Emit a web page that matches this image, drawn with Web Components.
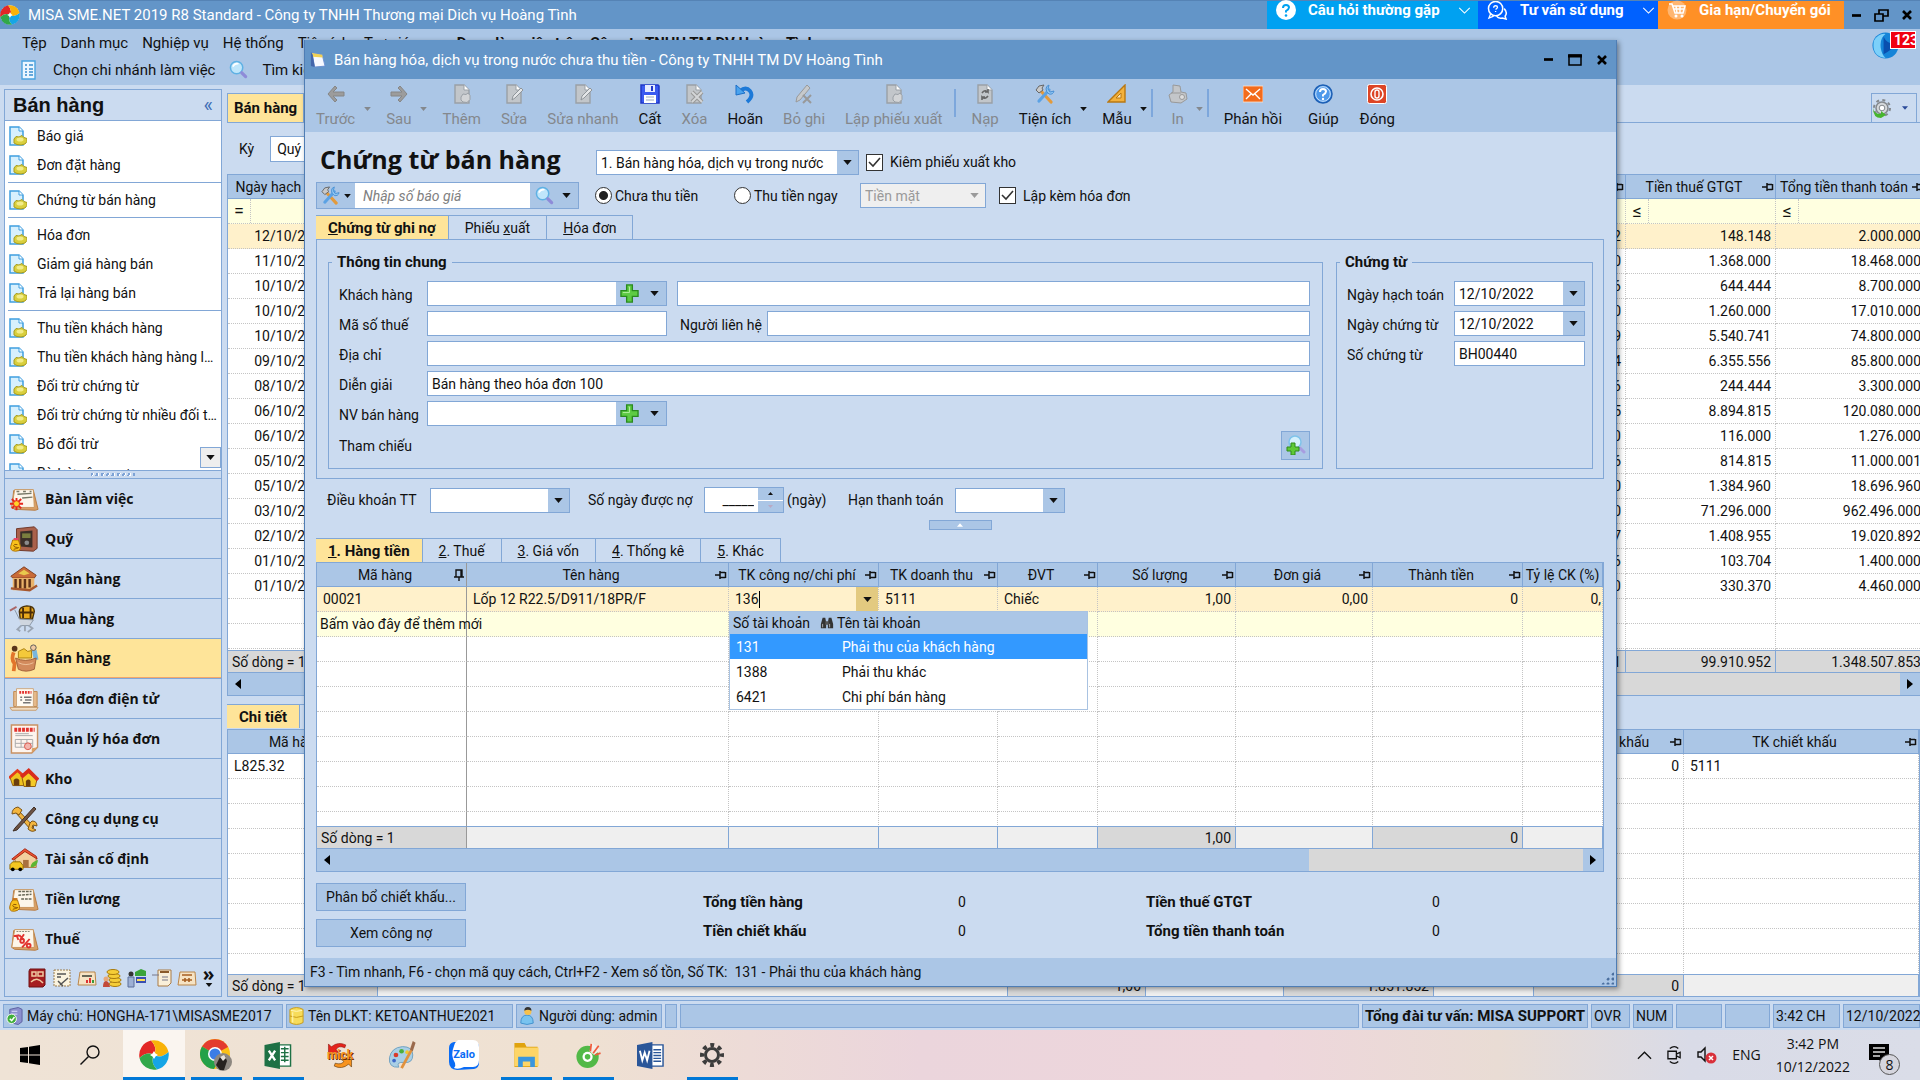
<!DOCTYPE html>
<html lang="vi">
<head>
<meta charset="utf-8">
<title>MISA SME.NET 2019</title>
<style>
  html, body { margin: 0; height: 100%; overflow: hidden; }
  body {
    font: 14px/18px Roboto, "Liberation Sans", sans-serif;
    color: #111;

    --title: #6395c8;
    --bar: #abc6e6;
    --face: #cbdbf0;
    --line: #82a7d6;
    --tab: #fee499;
    --row: #fff1cb;
    --newrow: #ffffe0;
    --grey: #d8d8d8;
    --ui-bold: "Open Sans", "Noto Sans", sans-serif;
  }
</style>
</head>
<body>
<misa-desktop></misa-desktop>

<script>
// ---------- helpers ----------
const BASE = `
  *, *::before, *::after { box-sizing: border-box; }
  button, input, select { font: inherit; color: inherit; margin: 0; border-radius: 0; }
  button { background: none; border: 0; padding: 0; cursor: default; white-space: nowrap; }
  a { color: inherit; text-decoration: none; }
  h1, h2 { margin: 0; font-weight: 700; }
  svg { display: block; flex: none; }
`;

function define(name, css, html) {
  customElements.define(name, class extends HTMLElement {
    connectedCallback() {
      if (this.shadowRoot) return;
      const root = this.attachShadow({ mode: 'open' });
      root.innerHTML = `<style>${BASE}${css}</style>` + (typeof html === 'function' ? html(this) : html);
    }
  });
}

// ---------- icons ----------
const PAGE = (fill, edge) => `<path d="M3 1h9l5 5v13H3z" fill="${fill}" stroke="${edge}" stroke-width="1.4"/><path d="M12 1v5h5" fill="#fff" stroke="${edge}"/>`;
const BOARD = `<path d="M5 5h21l5 20-3 1-22-1-3-2z" fill="#d9a066" stroke="#b5793f"/><path d="M6 4h20l1 19H3z" fill="#fdf6ea" stroke="#c8935a"/>`;
const GREY_DOC = PAGE('#c2c6ca', '#9aa0a6');
const BLADE = 'M15 15Q8 11 .5 18A15 15 0 0 1 12 .5Q19 8 15 15z';

const ICONS = {
  misa: ['0 0 30 30', `<circle cx="15" cy="15" r="14.500" fill="#fff"/><path d="${BLADE}" fill="#e32726"/><path d="${BLADE}" transform="rotate(90 15 15)" fill="#f9b208"/><path d="${BLADE}" transform="rotate(180 15 15)" fill="#16a5e5"/><path d="${BLADE}" transform="rotate(270 15 15)" fill="#31a84a"/><path d="M15 11l1.500 2.500L19 15l-2.500 1.500L15 19l-1.500-2.500L11 15l2.500-1.500z" fill="#fff"/>`],
  list: ['0 0 20 20', `<path d="M3 1h13v18H3z" fill="#eaf6ff" stroke="#4aa3df" stroke-width="1.4"/><path d="M6 5h2m2 0h4M6 9h2m2 0h4M6 12h2m2 0h4M6 15h2m2 0h4" stroke="#3a8fd0" stroke-width="1.6"/>`],
  find: ['0 0 20 20', `<circle cx="8" cy="8" r="6.5" fill="#bfe6fb" stroke="#5fb1e4" stroke-width="1.6"/><path d="M4 7q2-4 6-3" stroke="#fff" stroke-width="1.6" fill="none"/><path d="M13.5 13.5l4 4" stroke="#8e8bd8" stroke-width="3.4" stroke-linecap="round"/>`],
  findadd: ['0 0 20 20', `<circle cx="9" cy="7" r="6" fill="#d5f0fc" stroke="#7fc3ea" stroke-width="1.5"/><path d="M14 13l4 4" stroke="#a79de0" stroke-width="3" stroke-linecap="round"/><path d="M5 8h4v4h4v4H9v4H5v-4H1v-4h4z" fill="#5fc936" stroke="#2e8b1b"/>`],
  doc: ['0 0 18 20', `<path d="M1 1h9l4 4v14H1z" fill="#d7f0fd" stroke="#3f9ee0" stroke-width="1.5"/><path d="M10 1v4h4" fill="#fff" stroke="#3f9ee0"/><path d="M5 13l2-2.500 3 .5 3-1.500 2 2 3 1v3l-2 2.500-4 1-4-.5-3-1.500z" fill="#d9cf3d" stroke="#a79b1e"/><ellipse cx="11" cy="13.500" rx="3.500" ry="2" fill="#f2ec8a"/>`],
  desk: ['0 0 32 28', BOARD + `<path d="M9 9l15-1M8 6h3m4 0h3m4 0h2M14 13l11-1" stroke="#776" stroke-width="1.600"/><g stroke="#e5261b" stroke-width="2"><path d="M8 13v13M1 19h14M3 14l10 10M13 14L3 24"/></g><circle cx="8" cy="19" r="3.200" fill="#ffd32b" stroke="#e5261b"/>`],
  fund: ['0 0 32 28', `<path d="M8 3l19-2 3 3v20l-4 3-18-1z" fill="#a9614b" stroke="#6d3526"/><path d="M12 6l13-1v18l-13-1z" fill="#3b2f28"/><path d="M14 8h9v5h-9z" fill="#7b7f3e"/><circle cx="19" cy="18" r="2.500" fill="#8b8b8b"/><path d="M4 15h6l1 3q4 9-4 9T3 18z" fill="#f9c21a" stroke="#a96d06"/><path d="M5 14h5" stroke="#e46" stroke-width="2"/><path d="M9 20q-4-1-4 1t4 2-4 2" fill="none" stroke="#8a5300"/>`],
  bank: ['0 0 32 28', `<path d="M2 11L16 1l13 9-2 3H4z" fill="#c96b38" stroke="#7e3d1d"/><path d="M10 8l6-4 6 4-6 2z" fill="#e8c94d"/><path d="M4 13h23v10l-5 3H4z" fill="#e9b26a"/><path d="M7 14v10m5-10v10m5-10v10m5-10v9" stroke="#5e3219" stroke-width="2.600"/><path d="M2 24l20 2 8-5" stroke="#a6572e" stroke-width="2.500" fill="none"/>`],
  buy: ['0 0 32 30', `<path d="M1 6l7-4" stroke="#a66" stroke-width="2"/><path d="M11 7q0-5 8-6 8 0 8 6l-2 8H12z" fill="#e9a91c" stroke="#4a3208" stroke-width="1.500"/><path d="M15 3v11m8-12v12M11 8h15" stroke="#4a2c08" stroke-width="2"/><path d="M6 5l5 10 15 1-4 6H13" fill="#cfd6df" stroke="#8894a3"/><path d="M13 22l-4 4 3 2m9-6l4 3-5 4m-3-7v6" stroke="#9aa5b3" stroke-width="2" fill="none"/>`],
  sell: ['0 0 32 30', `<path d="M5 9q-3 8 1 12l-1 8" stroke="#e2752b" stroke-width="4" fill="none"/><circle cx="6" cy="5" r="3" fill="#5b3519"/><path d="M27 7l2 10" stroke="#78b7dd" stroke-width="5"/><circle cx="26" cy="4" r="3" fill="#f0c9a0" stroke="#555"/><path d="M10 8l6-3 4 3 4-1v8H10z" fill="#f4c93a" stroke="#a87c0c"/><path d="M7 15q10 5 22 0l-2 12q-9 4-17 0z" fill="#d28a5c" stroke="#a05f38"/><path d="M10 20q8 4 16 0" stroke="#efc39d" fill="none"/>`],
  einv: ['0 0 32 28', `<path d="M5 6h25v16H5z" fill="#e5b98a" stroke="#c08a50"/><path d="M8 3h18v19H8z" fill="#fffaf1" stroke="#caa37a"/><path d="M11 7h13" stroke="#e2332f" stroke-width="3" stroke-dasharray="2 1"/><path d="M12 12h2m2 0h8M12 15h2m3 0h7M15 18h8" stroke="#777" stroke-width="1.600"/><path d="M1 23h30l-2 3H3z" fill="#f1dcc0" stroke="#c79b6c"/>`],
  inv: ['0 0 30 31', `<path d="M2 1h27v23l-6 6H2z" fill="#fdf4ee" stroke="#c99163" stroke-width="1.500"/><path d="M29 24l-6 1v5z" fill="#d9a066"/><path d="M5 6h21" stroke="#e2332f" stroke-width="4" stroke-dasharray="3 1"/><path d="M6 10h14M6 12h18M6 16h18v8H6zm6 0v8m6-8v8M6 20h18" stroke="#aaa" fill="none"/><circle cx="19" cy="23" r="3.500" fill="#f3b5ad" stroke="#d9584d"/>`],
  stock: ['0 0 32 22', `<path d="M1 9l8-7 8 6v10H4z" fill="#efc31f" stroke="#8d5a0d"/><path d="M0 10l9-8 8 7" stroke="#e33b1d" stroke-width="3" fill="none"/><path d="M14 10l5-7 11 8-2 8H16z" fill="#f4ca26" stroke="#8d5a0d"/><path d="M13 9l8-7 10 10" stroke="#d92c1c" stroke-width="4" fill="none"/><path d="M5 18v-6q3-3 6 0v6m7 1v-6q3-3 5 0v6" fill="#6a3d0d"/>`],
  tools: ['0 0 30 28', `<path d="M6 4l3 1 16 17-3 3L7 8z" fill="#f0b440" stroke="#7d5416"/><path d="M25 2L6 23l-2 3 4-1L27 4z" fill="#6d5344" stroke="#3f2d22"/><path d="M9 2q-6 1-6 7l4-1 3 2 3-5zM21 18l-2 6q4 4 8 1l-4-2 1-3 4 1q0-5-5-5z" fill="#f4b63e" stroke="#7d5416"/>`],
  asset: ['0 0 32 26', `<path d="M6 12l12-8 11 7v11H8z" fill="#f3cf9d" stroke="#b0723a"/><path d="M3 13L17 2l12 8 1 3-13-8-12 9z" fill="#ee5331" stroke="#a32712"/><path d="M15 14h6v8h-6z" fill="#a9703f"/><path d="M1 19l3-3h8l3 4v4H1z" fill="#f5c721" stroke="#8f6a05"/><circle cx="4" cy="24" r="2"/><circle cx="12" cy="24" r="2"/><path d="M23 22q0-6 8-8-1 8-8 8z" fill="#5cb531"/>`],
  wage: ['0 0 32 28', BOARD + `<path d="M10 6h14M10 10l14-1M13 14h11" stroke="#665" stroke-width="1.600" stroke-dasharray="3 1"/><path d="M4 15h5l1 3q4 8-4 9T2 18z" fill="#f9c21a" stroke="#a96d06"/><path d="M4 14h5" stroke="#c8731c" stroke-width="2"/><path d="M8 20q-4-1-4 1t4 2-4 2" fill="none" stroke="#8a5300"/>`],
  tax: ['0 0 32 28', BOARD + `<path d="M8 6h14" stroke="#887" stroke-dasharray="2 1"/><path d="M5 11l6-1m-3 0l2 5m1-5l5 5m0-6l-4 6" stroke="#e2332f" stroke-width="2"/><path d="M14 23l8-9" stroke="#e2332f" stroke-width="2"/><circle cx="14" cy="16" r="2" fill="none" stroke="#e2332f" stroke-width="2"/><circle cx="21" cy="21" r="2" fill="none" stroke="#e2332f" stroke-width="2"/>`],
  s1: ['0 0 20 20', `<path d="M3 1h15v16l-2 2H2V3z" fill="#a61e20" stroke="#701012"/><path d="M5 4h4v4H5zm6 0h5v4h-5zM4 14q6-6 12 1" stroke="#f0c9a0" fill="none" stroke-width="1.500"/>`],
  s2: ['0 0 20 20', `<path d="M2 2h16v16H2z" fill="#fbf4df" stroke="#9a7a4a" stroke-dasharray="2 1"/><path d="M5 6h9M5 9h4m7 1l-8 7m-2-4l5 5" stroke="#555" stroke-width="1.500"/>`],
  s3: ['0 0 20 20', `<path d="M3 4h15l1 13H1z" fill="#f6e3c4" stroke="#b98549"/><path d="M5 8h10" stroke="#665" stroke-width="2"/><path d="M10 15v-3m3 3v-5" stroke="#d33" stroke-width="2"/><path d="M16 15v-3" stroke="#3a9a3a" stroke-width="2"/>`],
  s4: ['0 0 20 20', `<g fill="#f5cd37" stroke="#a97b0c"><ellipse cx="13" cy="16" rx="6" ry="2.500"/><ellipse cx="13" cy="12" rx="6" ry="2.500"/><ellipse cx="12" cy="8" rx="6" ry="2.500"/><ellipse cx="11" cy="4" rx="6" ry="2.500"/></g><circle cx="4" cy="11" r="2.500" fill="#e8a878"/><path d="M1 19q0-6 3-6t4 6z" fill="#c24a3a"/>`],
  s5: ['0 0 20 20', `<path d="M8 4l6-3 5 2v5H8z" fill="#39a33a"/><path d="M9 9h10v6H9z" fill="#3a4fb0"/><circle cx="4" cy="6" r="2.500" fill="#333"/><path d="M1 9h6v10H1z" fill="#9db0d4" stroke="#5a6f9a"/><path d="M10 12h8" stroke="#ffe05a" stroke-width="2"/>`],
  s6: ['0 0 20 20', `<path d="M6 2h13v13l-3 3H6z" fill="#f9efd9" stroke="#a97b45"/><path d="M8 4h9" stroke="#8a5a2a" stroke-width="2"/><path d="M0 7h7M10 9h6m-6 3h6" stroke="#778"/>`],
  s7: ['0 0 20 20', `<path d="M3 4h15l1 13H1z" fill="#f6e3c4" stroke="#b98549"/><path d="M5 7h10M5 12h10m-7 2v-4m4 4v-4" stroke="#a65f22" stroke-width="1.600"/>`],
  gear: ['0 0 20 20', `<circle cx="10" cy="10" r="6" fill="#d5d8db" stroke="#83888d" stroke-width="1.500"/><circle cx="10" cy="10" r="8" fill="none" stroke="#83888d" stroke-width="2" stroke-dasharray="3 3.300"/><circle cx="10" cy="10" r="2.800" fill="#fff" stroke="#83888d"/><path d="M1 10q1 6 8 6v-3l5 4-5 3q-8 0-8-10z" fill="#46b52e"/>`],
  book: ['0 0 18 18', `<path d="M3 2l11 2 3 12-11 1z" fill="#f7f9ff" stroke="#6a8fd0"/><path d="M3 2l11 2 .5 3L4 6z" fill="#f2d153"/><path d="M2 1v15l4 1L4 4z" fill="#46a"/>`],
  left: ['0 0 20 20', `<path d="M9 2L2 10l7 8 2-2-4-4h11V8H7l4-4z" fill="#9c9c9c" stroke="#868686"/>`],
  right: ['0 0 20 20', `<path d="M11 2l7 8-7 8-2-2 4-4H2V8h11L9 4z" fill="#9c9c9c" stroke="#868686"/>`],
  add: ['0 0 20 20', GREY_DOC + `<path d="M9 13l2-3 3 .5 2-1.500 2 2.500v4l-3 3-4-.5-2-2z" fill="#d2d4d6" stroke="#9aa0a6"/>`],
  edit: ['0 0 20 20', GREY_DOC + `<path d="M8 16l1-4 8-8 2 2-8 8z" fill="#e4e6e8" stroke="#8f959a"/>`],
  save: ['0 0 20 20', `<path d="M1 1h17l1 1v17H1z" fill="#3b5bf0" stroke="#2138c8" stroke-width="1.500"/><path d="M5 1h10v7H5z" fill="#e6ebff"/><path d="M11 2h2v5h-2z" fill="#2138c8"/><path d="M4 11h12v8H4z" fill="#fff"/><path d="M6 13h8m-8 3h8" stroke="#9ab"/>`],
  del: ['0 0 20 20', GREY_DOC + `<path d="M8 8l10 10M18 8L8 18" stroke="#999" stroke-width="4"/><path d="M8 8l10 10M18 8L8 18" stroke="#d4d6d8" stroke-width="1.800"/>`],
  undo: ['0 0 20 20', `<path d="M5 7q6-5 10 0 4 5-3 11" fill="none" stroke="#1c79d8" stroke-width="3.800"/><path d="M1 1v10l9-2z" fill="#4aa3ee" stroke="#1c6fc8"/>`],
  unpost: ['0 0 20 20', `<path d="M2 18l1-5L13 1l3 3L6 16z" fill="#c6c9cc" stroke="#999"/><path d="M9 11l8 8m0-8l-8 8" stroke="#999" stroke-width="2"/>`],
  reload: ['0 0 20 20', GREY_DOC + `<path d="M7 9q3-4 6-1V5m0 3h-3M13 12q-3 4-6 1v3m0-3h3" fill="none" stroke="#666" stroke-width="1.600"/>`],
  util: ['0 0 20 20', `<path d="M5 6l11 12" stroke="#e39a3b" stroke-width="3.200" stroke-linecap="round"/><path d="M14 6L4 17" stroke="#5ba2e4" stroke-width="3.200" stroke-linecap="round"/><path d="M1 6l3-4 5-1-2 3 1 2-4 3z" fill="#c9c9c9" stroke="#666"/><path d="M14 1l-1 4 2 3 4-1q-1 4-5 3-3-2-3-5 0-3 3-4z" fill="#8cc4f2" stroke="#4a90d4"/>`],
  ruler: ['0 0 20 20', `<path d="M18 1v17H1z" fill="#f3b13c" stroke="#b97812" stroke-width="1.400"/><path d="M14 9v5H9z" fill="#fbe6ba" stroke="#b97812"/>`],
  print: ['0 0 20 20', `<path d="M5 1l7 1 1 6 5 1 1 6-6 4-10-1-2-7 4-3z" fill="#c3c6c9" stroke="#999"/><path d="M3 9h10" stroke="#999"/><circle cx="14" cy="13" r="2.500" fill="#ddd" stroke="#999"/>`],
  mail: ['0 0 20 20', `<path d="M0 2h20v16H0z" fill="#f36b1c" stroke="#ffe3cf" stroke-width=".8"/><path d="M3 5l7 6 7-6M3 15l5-5m9 5l-5-5" stroke="#fff" fill="none" stroke-width="1.400"/>`],
  help: ['0 0 20 20', `<circle cx="10" cy="10" r="9" fill="#4d98ea" stroke="#1d5fb4" stroke-width="1.500"/><circle cx="10" cy="10" r="7.300" fill="none" stroke="#cfe4fb"/><path d="M7 8q0-3 3-3t3 2.500q0 1.500-3 3.500v1.500" fill="none" stroke="#fff" stroke-width="2"/><circle cx="10" cy="15" r="1.200" fill="#fff"/>`],
  power: ['0 0 20 20', `<rect x=".5" y=".5" width="19" height="19" rx="2" fill="#dd4526" stroke="#fff"/><circle cx="10" cy="10" r="6" fill="none" stroke="#fff" stroke-width="1.600"/><rect x="8" y="6" width="4" height="8" rx="2" fill="none" stroke="#fff" stroke-width="1.400"/>`],
  plus: ['0 0 20 20', `<path d="M7 1h6v6h6v6h-6v6H7v-6H1V7h6z" fill="#5ecb43" stroke="#2a8a1e" stroke-width="1.400"/><path d="M9 3h1v6H3" stroke="#b5efa2" fill="none"/>`],
  bino: ['0 0 16 16', `<path d="M3 2h3l1 5v7H1V9zm7 0h3l2 7v5H9V7z" fill="#333"/><path d="M6 6h4v4H6z" fill="#555"/><path d="M3 9v4m8-4v4" stroke="#bbb"/>`],
  pin: ['0 0 12 12', `<path d="M0 6h5M5 2v8M5 3.500h5M5 8.500h5.500M10.500 3v6" stroke="#111" stroke-width="1.500" fill="none"/>`],
  pinv: ['0 0 12 12', `<path d="M6 12V8M1 8h10M3 8V1h6v7M8 1v7" stroke="#111" stroke-width="1.400" fill="none"/>`],
  down: ['0 0 10 6', `<path d="M0 0h10L5 6z" fill="currentColor"/>`],
  up: ['0 0 10 6', `<path d="M0 6h10L5 0z" fill="currentColor"/>`],
  prev: ['0 0 6 10', `<path d="M6 0v10L0 5z"/>`],
  next: ['0 0 6 10', `<path d="M0 0v10l6-5z"/>`],
  chev: ['0 0 14 8', `<path d="M1 1l6 6 6-6" fill="none" stroke="currentColor" stroke-width="1.200"/>`],
  min: ['0 0 10 10', `<path d="M0 5h10" stroke="#000" stroke-width="3"/>`],
  max: ['0 0 14 12', `<path d="M1 1h12v10H1z" fill="none" stroke="#000" stroke-width="1.500"/><path d="M0 2h14" stroke="#000" stroke-width="3"/>`],
  restore: ['0 0 15 13', `<path d="M5 5V1h9v6H9M1 5h8v7H1z" fill="none" stroke="#000" stroke-width="1.700"/>`],
  close: ['0 0 10 10', `<path d="M1 1l8 8m0-8L1 9" stroke="#000" stroke-width="2.600"/>`],
  faq: ['0 0 20 20', `<circle cx="10" cy="10" r="10" fill="#fff"/><path d="M7 8q0-3 3-3t3 2.500q0 1.500-3 3.500v1.500" fill="none" stroke="#00a1f1" stroke-width="2"/><circle cx="10" cy="15.500" r="1.300" fill="#00a1f1"/>`],
  chat: ['0 0 22 20', `<circle cx="9" cy="8" r="7.500" fill="none" stroke="#fff" stroke-width="1.600"/><path d="M4 13l-2 5 5-2" fill="none" stroke="#fff" stroke-width="1.400"/><path d="M7 7q0-2 2-2t2 1.500q0 1-2 2.500m0 1.500v1" fill="none" stroke="#fff" stroke-width="1.400"/><path d="M18 8q4 4 1 8l1 3-4-1q-4 1-6-2" fill="none" stroke="#fff" stroke-width="1.600"/>`],
  cart: ['0 0 20 20', `<circle cx="10" cy="10" r="9.500" fill="#fff" opacity=".35"/><path d="M2 4h3l3 9h8l2-7H6M9 6l1 7m3-7v7M7 9h10" fill="none" stroke="#fff" stroke-width="1.500"/><circle cx="9" cy="16" r="1.500" fill="#fff"/><circle cx="15" cy="16" r="1.500" fill="#fff"/>`],
  globe: ['0 0 28 28', `<circle cx="14" cy="14" r="13.500" fill="#1584d8"/><path d="M2 9q5-8 12-7-6 4-5 14 1 7 5 11Q-1 25 2 9z" fill="#7cd0fa"/><path d="M12 5q3 7 12 8-5 7-12 10z" fill="#0a4fae"/>`],
  server: ['0 0 18 20', `<path d="M4 3l9-2 4 2v13l-4 3-9-2z" fill="#8b8fce" stroke="#5a5f9f"/><path d="M6 5h6M6 8h6" stroke="#dfe1ff"/><circle cx="6" cy="13" r="5" fill="#3fae3b" stroke="#fff"/><path d="M4 13l2 2 3-4" stroke="#fff" stroke-width="1.600" fill="none"/>`],
  db: ['0 0 16 20', `<path d="M1 3q7-4 14 0v14q-7 4-14 0z" fill="#f7dc5a" stroke="#c79a16"/><path d="M1 10q7 3 14 0" stroke="#c79a16" fill="none"/><path d="M2 4q6 2 12 0M4 6v11" stroke="#fff7c0" fill="none"/>`],
  user: ['0 0 18 20', `<path d="M2 18q0-9 7-9t7 9q-7 3-14 0z" fill="#79c3ef" stroke="#3d8ecb"/><circle cx="10" cy="5" r="4" fill="#f6c14c"/><path d="M6 4q0-4 4-4t4 4q-4-2-8 0z" fill="#333"/>`],
  win: ['0 0 20 20', `<path d="M0 3l8-1v7.500H0zM9 1.800L20 0v9.500H9zM0 10.500h8V18l-8-1zM9 10.500h11V20L9 18.200z"/>`],
  lens: ['0 0 20 20', `<circle cx="13" cy="7" r="6" fill="none" stroke="#111" stroke-width="1.400"/><path d="M8.500 11.500L.5 19.500" stroke="#111" stroke-width="1.400"/>`],
  chrome: ['0 0 32 32', `<circle cx="15" cy="15" r="15" fill="#fbc116"/><path d="M15 15L2 7.500A15 15 0 0 1 28 8z" fill="#e33b2e"/><path d="M2 7.500A15 15 0 0 0 14 30l6-11-5-4z" fill="#24a148"/><circle cx="15" cy="15" r="7" fill="#fff"/><circle cx="15" cy="15" r="5.500" fill="#3c7de6"/><circle cx="23" cy="23" r="9" fill="#8d8780"/><path d="M16 26l4-8 5-1 2 5-3 9h-4z" fill="#26221f"/><path d="M20 18l4-2 2 3-3 3z" fill="#e8e2da"/>`],
  excel: ['0 0 28 28', `<path d="M14 3h13v22H14z" fill="#fff" stroke="#1e7145" stroke-width="1.500"/><path d="M17 7h8m-8 4h8m-8 4h8m-8 4h8m-4-14v16" stroke="#1e7145" stroke-width="1.500"/><path d="M0 3l16-3v28L0 25z" fill="#1e7145"/><path d="M4.500 9l6.500 10M11 9L4.500 19" stroke="#fff" stroke-width="2.400"/>`],
  mick: ['0 0 30 26', `<path d="M3 1l3 3Q13-2 21 2l-1 3q-7-3-9 2l3 3H3z" fill="#e5231b" stroke="#8d110c" stroke-width=".6"/><path d="M27 25l-3-3q-7 6-15 2l1-3q7 2 9-2l-3-2h11z" fill="#f7931e" stroke="#5b3305" stroke-width=".6"/>`],
  paint: ['0 0 30 30', `<path d="M1 18Q3 7 15 6q11 0 11 9t-9 8-6 5Q0 29 1 18z" fill="#a9cfe6" stroke="#6d9fbf"/><circle cx="8" cy="15" r="2.500" fill="#d93a2b"/><circle cx="14" cy="11" r="2.500" fill="#4caf3e"/><circle cx="6" cy="21" r="2" fill="#3c66c9"/><circle cx="20" cy="12" r="2" fill="#f1c62e"/><path d="M14 29L25 9" stroke="#e0913d" stroke-width="3"/><path d="M23 9l3-9 3 2-3 9z" fill="#9a6a4c"/>`],
  zalo: ['0 0 30 30', `<path d="M5 2h20q5 0 5 5v16q0 5-5 6l-17 1q-8-1-8-8V8q0-5 5-6z" fill="#0a6cf5"/><path d="M9 0h15q6 0 6 7v13q0 7-6 7h-9q-6 3-10 1 2-2 1-5-5-8-1-17 1-4 4-6z" fill="#fff"/>`],
  folder: ['0 0 28 28', `<path d="M1 1h11l2 4h12v22H1z" fill="#e0a30e"/><path d="M1 6h26v20H1z" fill="#fdd567"/><path d="M5 27V16h18v11h-5v-6h-8v6z" fill="#3a96dd"/>`],
  coc: ['0 0 26 28', `<circle cx="12" cy="16" r="12" fill="#52b947"/><circle cx="12" cy="16" r="5.500" fill="#fff"/><circle cx="12" cy="16" r="3" fill="#52b947"/><path d="M14 10l3-9 9 8-7 5z" fill="#f3ece6"/><path d="M15 10l1-8M18 12l6-8M20 14l6-2" stroke="#f05a3c" stroke-width="1.800"/>`],
  word: ['0 0 28 28', `<path d="M14 3h13v22H14z" fill="#fff" stroke="#2a5699" stroke-width="1.500"/><path d="M17 8h8m-8 3h8m-8 3h8m-8 3h8m-8 3h8" stroke="#2a5699" stroke-width="1.400"/><path d="M0 3l16-3v28L0 25z" fill="#2a5699"/><path d="M3 9l2.500 10L8 11l2.500 8L13 9" stroke="#fff" stroke-width="1.900" fill="none"/>`],
  cog: ['0 0 24 24', `<circle cx="12" cy="12" r="6.500" fill="none" stroke="#3c3c3c" stroke-width="3"/><circle cx="12" cy="12" r="10" fill="none" stroke="#3c3c3c" stroke-width="4" stroke-dasharray="3.900 3.950" stroke-dashoffset="2"/>`],
  caret: ['0 0 16 9', `<path d="M1 8l7-7 7 7" fill="none" stroke="#111" stroke-width="1.400"/>`],
  cam: ['0 0 16 20', `<path d="M3 3q5-4 9 0M3 17q5 4 9 0M1 6h9v8H1zM10 9l4-2v6l-4-2" fill="none" stroke="#111" stroke-width="1.400"/>`],
  mute: ['0 0 20 18', `<path d="M1 6h3l4-4v13l-4-4H1z" fill="none" stroke="#111" stroke-width="1.400"/><circle cx="14" cy="12" r="5.500" fill="#d9303a"/><path d="M12 10l4 4m0-4l-4 4" stroke="#fff" stroke-width="1.500"/>`],
  note: ['0 0 20 20', `<path d="M0 0h20v16h-5v4l-5-4H0z"/><path d="M4 4h12M4 8h12M4 12h7" stroke="#ddd" stroke-width="1.300"/>`],
};

const icon = (name, w, h = w) =>
  `<svg width="${w}" height="${h}" viewBox="${ICONS[name][0]}" aria-hidden="true">${ICONS[name][1]}</svg>`;

// ---------- tool-button: icon over a caption, with an optional drop arrow ----------
define('tool-button', `
  :host { display: flex; flex: none; font-size: 15px; }
  button { display: flex; flex-direction: column; align-items: center; gap: 6px; padding: 5px 0 0; }
  :host([off]) button { color: #84888d; }
  .drop { justify-content: center; width: 24px; padding: 6px 0 0; }
  span { height: 18px; }
`, el => `
  <button type="button" ${el.hasAttribute('off') ? 'disabled' : ''}>${icon(el.getAttribute('icon'), 20)}<span><slot></slot></span></button>
  ${el.hasAttribute('drop') ? `<button class="drop" type="button" aria-label="Mở">${icon('down', 7, 4)}</button>` : ''}
`);

// ---------- tab-strip ----------
define('tab-strip', `
  :host { display: flex; flex: none; }
  button { height: 24px; padding: 0 16px; border: 1px solid var(--line); border-width: 1px 1px 0 0; }
  button:first-child { border-left-width: 1px; }
  button.on { background: var(--tab); font-weight: 700; font-size: 15px; padding: 0 12px; }
`, el => el.getAttribute('tabs').split('|').map((t, i) => {
  const label = t.replace(/_(.)/, '<u>$1</u>');
  return `<button type="button" role="tab" aria-selected="${i === 0}" class="${i === 0 ? 'on' : ''}">${label}</button>`;
}).join(''));

// ---------- group-box ----------
define('group-box', `
  :host { display: flex; min-width: 0; }
  fieldset { flex: 1; min-width: 0; margin: 0; border: 1px solid var(--line); padding: 10px var(--box-right, 12px) 9px 10px; }
  legend { height: 18px; margin-left: -7px; padding: 0 5px; font-weight: 700; font-size: 15px; }
`, el => `<fieldset><legend>${el.getAttribute('caption')}</legend><slot></slot></fieldset>`);

// ---------- data-grid ----------
// Reads its columns and rows from GRIDS[source].
const GRIDS = {
  vouchers: {
    fill: 3,
    cols: [
      { w: 126, t: 'Ngày hạch toán', a: 'c', f: '=' }, { t: '' }, { w: 150, t: 'Tổng tiền hàng', a: 'r' },
      { w: 150, t: 'Tiền thuế GTGT', a: 'r', f: '≤' }, { w: 150, t: 'Tổng tiền thanh toán', a: 'r', f: '≤' },
    ],
    filter: true,
    rows: [
      ['12/10/2022', '', '1.851.852', '148.148', '2.000.000'],
      ['11/10/2022', '', '17.100.000', '1.368.000', '18.468.000'],
      ['10/10/2022', '', '8.055.556', '644.444', '8.700.000'],
      ['10/10/2022', '', '15.750.000', '1.260.000', '17.010.000'],
      ['10/10/2022', '', '69.259.259', '5.540.741', '74.800.000'],
      ['09/10/2022', '', '79.444.444', '6.355.556', '85.800.000'],
      ['08/10/2022', '', '3.055.556', '244.444', '3.300.000'],
      ['06/10/2022', '', '111.185.185', '8.894.815', '120.080.000'],
      ['06/10/2022', '', '1.160.000', '116.000', '1.276.000'],
      ['05/10/2022', '', '10.185.186', '814.815', '11.000.001'],
      ['05/10/2022', '', '17.312.000', '1.384.960', '18.696.960'],
      ['03/10/2022', '', '891.200.000', '71.296.000', '962.496.000'],
      ['02/10/2022', '', '17.611.937', '1.408.955', '19.020.892'],
      ['01/10/2022', '', '1.296.296', '103.704', '1.400.000'],
      ['01/10/2022', '', '4.129.630', '330.370', '4.460.000'],
    ],
    sel: 0,
    sum: ['Số dòng = 15', '', '1.248.596.901', '99.910.952', '1.348.507.853'],
    scroll: true,
  },
  details: {
    fill: 10,
    cols: [
      { w: 150, t: 'Mã hàng' }, { t: '' }, { w: 138, t: '', a: 'r' }, { w: 138, t: '', a: 'r' }, { w: 150, t: '', a: 'r' },
      { w: 100, t: '' }, { w: 150, t: 'Tiền chiết khấu', a: 'r' }, { w: 235, t: 'TK chiết khấu' },
    ],
    rows: [['L825.32', '', '', '', '', '', '0', '5111']],
    sum: ['Số dòng = 1', '', '1,00', '', '1.851.852', '', '0', ''],
  },
  lines: {
    fill: 9,
    frozen: true,
    cols: [
      { w: 150, t: 'Mã hàng' }, { t: 'Tên hàng' }, { w: 150, t: 'TK công nợ/chi phí' }, { w: 119, t: 'TK doanh thu' },
      { w: 100, t: 'ĐVT' }, { w: 138, t: 'Số lượng', a: 'r' }, { w: 137, t: 'Đơn giá', a: 'r' },
      { w: 150, t: 'Thành tiền', a: 'r' }, { w: 80, t: 'Tỷ lệ CK (%)', a: 'r', nopin: true },
    ],
    rows: [
      ['00021', 'Lốp 12 R22.5/D911/18PR/F', '<account-editor></account-editor>', '5111', 'Chiếc', '1,00', '0,00', '0', '0,'],
      ['Bấm vào đây để thêm mới', '', '', '', '', '', '', '', ''],
    ],
    sel: 0,
    add: 1,
    sum: ['Số dòng = 1', '', '', '', '', '1,00', '', '0', ''],
    scroll: true,
  },
};

define('data-grid', `
  :host { display: flex; flex-direction: column; min-height: 0; border: 1px solid var(--line); border-right: 0; overflow: hidden; }
  :host([closed]) { border-right: 1px solid var(--line); }
  .body { flex: 1; min-height: 0; overflow: hidden; background: #fff; }
  table { width: 100%; table-layout: fixed; border-collapse: separate; border-spacing: 0; }
  :host([wide]) table { width: calc(100% + 6px); }
  th { height: 24px; padding: 0; background: var(--bar); font-weight: 400; border: solid var(--line); border-width: 0 1px 1px 0; }
  th div { display: flex; align-items: center; padding-right: 1px; overflow: hidden; white-space: nowrap; }
  th span { flex: 1; text-align: center; overflow: hidden; }
  th div.nopin { padding: 0; }
  td { height: 25px; padding: 0 4px 0 6px; border: dotted #c4c4c4; border-width: 0 1px 1px 0; white-space: nowrap; overflow: hidden; }
  td.r { text-align: right; }
  td.c { text-align: center; }
  .sel { background: var(--row); }
  .new, .filter { background: var(--newrow); }
  .new td:first-child { overflow: visible; padding-left: 3px; }
  .frozen td:first-child, .frozen th:first-child { border-right: 1px solid #999; }
  .frozen td:last-child { padding-right: 1px; }
  td.edit { padding: 0; overflow: visible; }
  .filter td { padding: 0; font-size: 18px; }
  .filter b { display: block; width: 23px; height: 24px; line-height: 24px; border-right: 1px dotted #c4c4c4; text-align: center; font-weight: 400; }
  .sum td { height: 22px; background: #efefef; border: solid var(--line); border-width: 1px 1px 0 0; }
  .sum td.v { background: var(--grey); }
  .sum td:first-child { padding-left: 4px; }
  .scroll { flex: none; display: flex; height: 23px; border-top: 1px solid var(--line); background: var(--bar); }
  .scroll button { width: 20px; display: grid; place-items: center; }
  .track { flex: 1; display: flex; justify-content: flex-end; }
  .track i { width: 22%; background: var(--grey); }
`, el => {
  const g = GRIDS[el.getAttribute('source')];
  const fz = g.frozen ? 'frozen' : '';
  const colgroup = `<colgroup>${g.cols.map(c => c.w ? `<col style="width:${c.w}px">` : '<col>').join('')}</colgroup>`;
  const head = g.cols.map((c, i) => {
    const pin = c.nopin ? '' : icon(g.frozen && i === 0 ? 'pinv' : 'pin', 12);
    return `<th><div class="${c.nopin ? 'nopin' : ''}"><span>${c.t}</span>${c.t ? pin : ''}</div></th>`;
  }).join('');
  const filter = g.filter ? `<tr class="filter">${g.cols.map(c => `<td>${c.f ? `<b>${c.f}</b>` : ''}</td>`).join('')}</tr>` : '';
  const rows = g.rows.map((r, n) => `<tr class="${n === g.sel ? 'sel' : n === g.add ? 'new' : ''}">${r.map((v, i) =>
    `<td class="${g.cols[i].a || ''} ${v.startsWith('<') ? 'edit' : ''}">${v}</td>`).join('')}</tr>`).join('');
  const blank = `<tr>${'<td></td>'.repeat(g.cols.length)}</tr>`.repeat(g.fill);
  const sum = g.sum.map((v, i) => `<td class="${i ? g.cols[i].a || '' : ''} ${v ? 'v' : ''}">${v}</td>`).join('');
  return `
    <div class="body"><table class="${fz}">${colgroup}<thead><tr>${head}</tr></thead><tbody>${filter}${rows}${blank}</tbody></table></div>
    <table class="sum ${fz}">${colgroup}<tbody><tr>${sum}</tr></tbody></table>
    ${g.scroll ? `<div class="scroll"><button type="button" aria-label="Trái">${icon('prev', 6, 10)}</button><div class="track"><i></i></div><button type="button" aria-label="Phải">${icon('next', 6, 10)}</button></div>` : ''}
  `;
});

// ---------- account-editor: cell editor with its lookup list ----------
define('account-editor', `
  :host { display: block; position: relative; height: 24px; z-index: 5; }
  .edit { display: flex; align-items: center; height: 24px; padding-left: 6px; }
  input { width: 24px; padding: 0; border: 0; background: none; outline: 0; }
  .caret { width: 1px; height: 17px; background: #000; }
  .edit button { width: 22px; height: 24px; margin-left: auto; display: grid; place-items: center; background: #e3ca80; }
  .list { position: absolute; top: 24px; left: 0; width: 359px; background: #fff; border: 1px solid #a9c3e2; }
  table { width: 100%; border-spacing: 0; table-layout: fixed; }
  th { height: 22px; padding: 0 0 0 3px; background: var(--bar); text-align: left; font-weight: 400; }
  th span { display: flex; align-items: center; gap: 3px; }
  td { height: 25px; padding: 0 0 0 6px; }
  td + td { padding-left: 25px; }
  .on { background: #3399ff; color: #fff; }
`, `
  <div class="edit"><input value="136" aria-label="TK công nợ/chi phí"><i class="caret"></i><button type="button" aria-label="Chọn tài khoản">${icon('down', 9, 5)}</button></div>
  <div class="list"><table>
    <colgroup><col style="width:87px"><col></colgroup>
    <thead><tr><th>Số tài khoản</th><th><span>${icon('bino', 14)}Tên tài khoản</span></th></tr></thead>
    <tbody>
      <tr class="on"><td>131</td><td>Phải thu của khách hàng</td></tr>
      <tr><td>1388</td><td>Phải thu khác</td></tr>
      <tr><td>6421</td><td>Chi phí bán hàng</td></tr>
    </tbody>
  </table></div>
`);

// ---------- side-nav ----------
const LINKS = ['Báo giá', 'Đơn đặt hàng', '-', 'Chứng từ bán hàng', '-', 'Hóa đơn', 'Giảm giá hàng bán', 'Trả lại hàng bán', '-',
  'Thu tiền khách hàng', 'Thu tiền khách hàng hàng loạt', 'Đối trừ chứng từ', 'Đối trừ chứng từ nhiều đối tượng', 'Bỏ đối trừ', 'Bù trừ công nợ'];
const MODULES = [['desk', 'Bàn làm việc'], ['fund', 'Quỹ'], ['bank', 'Ngân hàng'], ['buy', 'Mua hàng'], ['sell', 'Bán hàng'],
  ['einv', 'Hóa đơn điện tử'], ['inv', 'Quản lý hóa đơn'], ['stock', 'Kho'], ['tools', 'Công cụ dụng cụ'],
  ['asset', 'Tài sản cố định'], ['wage', 'Tiền lương'], ['tax', 'Thuế']];

define('side-nav', `
  :host { display: flex; flex-direction: column; border: 1px solid var(--line); }
  header { display: flex; align-items: center; justify-content: space-between; height: 31px; padding: 0 8px; border-bottom: 1px solid var(--line); }
  h2 { font: 700 20px/30px "Liberation Sans", sans-serif; }
  header button { font-size: 20px; color: #3d6db5; }
  .links { position: relative; flex: 1; min-height: 0; overflow: hidden; background: #fff; }
  .links a { display: flex; align-items: center; gap: 10px; height: 29px; padding: 0 4px; }
  .links span { flex: 1; overflow: hidden; text-overflow: ellipsis; white-space: nowrap; }
  hr { margin: 3px 0 2px 3px; border: 0; border-top: 1px solid var(--line); }
  .more { position: absolute; right: 0; bottom: 2px; width: 21px; height: 21px; display: grid; place-items: center; background: #eee; border: 1px solid var(--line); }
  .grip { height: 8px; border-top: 1px solid var(--line); display: grid; place-items: center; }
  .grip i { width: 44px; height: 3px; background: repeating-linear-gradient(110deg, #7ea3d6 0 2px, #fff 2px 3px, transparent 3px 5px); }
  .mod { display: flex; align-items: center; gap: 6px; height: 40px; padding-left: 4px; border-top: 1px solid var(--line); text-align: left; font: 700 14px/20px var(--ui-bold); }
  .mod.on { background: var(--tab); border-bottom: 1px solid #f3a66a; }
  .strip { display: flex; align-items: center; gap: 5px; height: 38px; padding: 0 6px 0 22px; border-top: 1px solid var(--line); }
  .strip .exp { margin-left: auto; width: 16px; font: 700 19px/12px var(--ui-bold); display: grid; justify-items: center; gap: 3px; }
`, `
  <header><h2>Bán hàng</h2><button type="button" aria-label="Thu gọn">«</button></header>
  <nav class="links">
    ${LINKS.map(t => t === '-' ? '<hr>' : `<a href="#">${icon('doc', 18, 20)}<span>${t}</span></a>`).join('')}
    <button class="more" type="button" aria-label="Cuộn xuống">${icon('down', 9, 5)}</button>
  </nav>
  <div class="grip"><i></i></div>
  ${MODULES.map(([i, t]) => `<button type="button" class="mod ${i === 'sell' ? 'on' : ''}">${icon(i, 30, 30)}<span>${t}</span></button>`).join('')}
  <div class="strip">
    ${[1, 2, 3, 4, 5, 6, 7].map(n => `<button type="button" aria-label="Phân hệ ${n}">${icon('s' + n, 20)}</button>`).join('')}
    <button class="exp" type="button" aria-label="Thêm"><span>»</span>${icon('down', 8, 4)}</button>
  </div>
`);

// ---------- voucher-dialog ----------
define('voucher-dialog', `
  :host { display: flex; flex-direction: column; background: var(--face); border: 1px solid #4f7db4; border-top: 0; box-shadow: 2px 2px 5px rgba(0, 0, 0, .4); }
  .title { display: flex; align-items: center; gap: 8px; flex: none; height: 39px; padding: 0 9px 0 4px; background: var(--title); color: #fff; font-size: 15px; }
  .title b { flex: 1; font-weight: 400; }
  .win { display: flex; align-items: center; gap: 15px; }
  .tools { display: flex; gap: 20px; height: 53px; padding-left: 11px; background: var(--bar); }
  .tools tool-button[drop] { margin-right: -13px; }
  .tools hr { width: 2px; height: 28px; margin: 10px -5px 0 -8px; border: 0; background: #7da7dc; }
  .tools hr.near { margin-left: -12px; }
  .tools .help { margin: 0 1px 0 6px; }
  .main { flex: 1; min-height: 0; display: flex; flex-direction: column; padding: 0 12px 0 11px; }

  input[type=text], select { height: 25px; padding: 0 4px; background: #fff; border: 1px solid var(--line); outline: 0; min-width: 0; }
  select { appearance: none; }
  .combo { position: relative; display: block; height: 25px; border: 1px solid var(--line); background: var(--bar); }
  .combo select, .combo input[type=text] { border: 0; height: 23px; display: block; padding: 0 4px; width: calc(100% - 21px); }
  .combo > svg { position: absolute; right: 6px; top: 9px; pointer-events: none; }
  .combo.off { background: #efefef; color: #9a9a9a; }
  .combo.off select { background: #efefef; opacity: 1; }
  .pick { display: flex; align-items: center; background: var(--bar); border: 1px solid var(--line); height: 25px; }
  .pick input[type=text] { flex: 1; border: 0; height: 23px; }
  .pick button { padding: 0 4px; height: 23px; display: grid; place-items: center; }
  .pick button:last-child { padding: 0 7px; }

  .head { display: flex; }
  .head.a { height: 50px; align-items: flex-end; padding: 0 0 7px 4px; line-height: 25px; }
  .head.b { height: 27px; align-items: center; }
  h1 { width: 276px; font: 700 25px/32px var(--ui-bold); }
  .head label { display: flex; align-items: center; gap: 3px; }
  .head label.c { gap: 7px; }
  input[type=radio], input[type=checkbox] { appearance: none; width: 17px; height: 17px; background: #fff; border: 1px solid #333; }
  input[type=radio] { border-radius: 50%; }
  input[type=radio]:checked { background: radial-gradient(circle, #222 0 4px, #fff 5px); }
  input[type=checkbox]:checked { background: #fff url('data:image/svg+xml,<svg xmlns="http://www.w3.org/2000/svg" viewBox="0 0 15 15"><path d="M2 7l4 4 7-8" fill="none" stroke="%23333" stroke-width="1.600"/></svg>'); }
  .quote { width: 263px; height: 27px; margin-right: 16px; }
  .quote input[type=text] { height: 25px; padding: 0 8px; font-style: italic; }
  .quote input::placeholder { color: #808080; }
  .quote button:first-child { display: flex; align-items: center; gap: 4px; padding: 0 4px; }
  .quote button:last-child { display: flex; align-items: center; gap: 8px; padding: 0 7px 0 5px; }

  tab-strip { margin-top: 6px; }
  .panel { display: flex; gap: 13px; padding: 13px 10px 9px 11px; border: 1px solid var(--line); }
  .info { flex: 1; }
  .doc { width: 257px; --box-right: 7px; }
  .doc .f label { width: 107px; }
  .rows { display: flex; flex-direction: column; gap: 5px; }
  .f { display: flex; align-items: center; height: 25px; }
  .f > label, .f > .cap { width: 88px; flex: none; white-space: nowrap; padding-top: 2px; }
  .f .short { width: 240px; flex: none; margin-right: 10px; }
  .f .wide { flex: 1; }
  .f label.contact { padding-left: 3px; width: 90px; }
  .ref { margin-left: auto; width: 29px; height: 29px; display: grid; place-items: center; background: var(--bar); border: 1px solid var(--line); }
  .terms { display: flex; align-items: center; height: 26px; margin-top: 8px; padding-left: 11px; white-space: nowrap; }
  .spin { display: flex; width: 80px; height: 26px; border: 1px solid var(--line); background: var(--bar); }
  .spin input[type=text] { flex: 1; border: 0; height: 24px; text-align: right; }
  .spin div { width: 25px; display: flex; flex-direction: column; }
  .spin button { flex: 1; display: grid; place-items: center; }
  .spin button + button { border-top: 1px solid #fff; color: #b9a9c4; }
  .fold { align-self: center; width: 63px; height: 10px; margin-top: 7px; border: 1px solid var(--line); background: var(--bar); display: grid; place-items: center; color: #fff; }
  .lines-tabs { margin-top: 8px; }
  data-grid { flex: 1; }
  .foot { display: flex; gap: 237px; margin: 11px 0; }
  .cmds { display: flex; flex-direction: column; gap: 8px; width: 150px; }
  .cmds button { height: 28px; background: var(--bar); border: 1px solid var(--line); }
  dl { display: grid; grid-template-columns: auto 1fr; grid-auto-rows: 29px; column-gap: 155px; margin: 4px 0 0; width: 435px; align-items: center; }
  dl.second { margin-left: -229px; column-gap: 149px; }
  dt { font-weight: 700; font-size: 15px; width: 100px; white-space: nowrap; }
  dd { margin: 0; }
  dl.second dt { width: 137px; }
  .hint { display: flex; align-items: center; height: 28px; padding: 0 2px 0 5px; background: var(--bar); white-space: pre; }
  .grip { margin: 12px 0 0 auto; width: 13px; height: 13px; background: radial-gradient(circle at 2px 2px, #4b6f9f 1px, transparent 2px) 0 0 / 5px 5px; clip-path: polygon(100% 0, 100% 100%, 0 100%); }
`, `
  <div class="title">${icon('book', 17)}<b>Bán hàng hóa, dịch vụ trong nước chưa thu tiền - Công ty TNHH TM DV Hoàng Tình</b>
    <div class="win">
      <button type="button" aria-label="Thu nhỏ">${icon('min', 9, 9)}</button>
      <button type="button" aria-label="Phóng to">${icon('max', 14, 12)}</button>
      <button type="button" aria-label="Đóng cửa sổ">${icon('close', 10)}</button>
    </div>
  </div>
  <div class="tools" role="toolbar">
    <tool-button icon="left" off drop>Trước</tool-button>
    <tool-button icon="right" off drop>Sau</tool-button>
    <tool-button icon="add" off>Thêm</tool-button>
    <tool-button icon="edit" off>Sửa</tool-button>
    <tool-button icon="edit" off>Sửa nhanh</tool-button>
    <tool-button icon="save">Cất</tool-button>
    <tool-button icon="del" off>Xóa</tool-button>
    <tool-button icon="undo">Hoãn</tool-button>
    <tool-button icon="unpost" off>Bỏ ghi</tool-button>
    <tool-button icon="add" off>Lập phiếu xuất</tool-button>
    <hr>
    <tool-button icon="reload" off>Nạp</tool-button>
    <tool-button icon="util" drop>Tiện ích</tool-button>
    <tool-button icon="ruler" drop>Mẫu</tool-button>
    <hr class="near">
    <tool-button icon="print" off drop>In</tool-button>
    <hr class="near">
    <tool-button icon="mail">Phản hồi</tool-button>
    <tool-button class="help" icon="help">Giúp</tool-button>
    <tool-button icon="power">Đóng</tool-button>
  </div>

  <div class="main">
    <div class="head a">
      <h1>Chứng từ bán hàng</h1>
      <span class="combo" style="width:263px"><select aria-label="Loại chứng từ"><option>1. Bán hàng hóa, dịch vụ trong nước</option></select>${icon('down', 9, 5)}</span>
      <label class="c" style="margin-left:7px"><input type="checkbox" checked>Kiêm phiếu xuất kho</label>
    </div>
    <div class="head b">
      <div class="pick quote">
        <button type="button" aria-label="Tùy chọn">${icon('util', 19)}${icon('down', 7, 4)}</button>
        <input type="text" placeholder="Nhập số báo giá" aria-label="Số báo giá">
        <button type="button" aria-label="Tìm báo giá">${icon('find', 19)}${icon('down', 9, 5)}</button>
      </div>
      <label style="width:139px"><input type="radio" name="pay" checked>Chưa thu tiền</label>
      <label style="width:126px"><input type="radio" name="pay">Thu tiền ngay</label>
      <span class="combo off" style="width:126px"><select disabled aria-label="Hình thức"><option>Tiền mặt</option></select>${icon('down', 9, 5)}</span>
      <label class="c" style="margin-left:13px"><input type="checkbox" checked>Lập kèm hóa đơn</label>
    </div>

    <tab-strip tabs="_Chứng từ ghi nợ|Phiếu _xuất|_Hóa đơn"></tab-strip>
    <div class="panel">
      <group-box class="info" caption="Thông tin chung">
        <div class="rows">
          <div class="f"><label for="cus">Khách hàng</label>
            <div class="pick short"><input id="cus" type="text"><button type="button" aria-label="Thêm khách hàng">${icon('plus', 19)}</button><button type="button" aria-label="Chọn khách hàng">${icon('down', 9, 5)}</button></div>
            <input class="wide" type="text" aria-label="Tên khách hàng"></div>
          <div class="f"><label for="mst">Mã số thuế</label><input id="mst" class="short" type="text"><label class="contact" for="lh">Người liên hệ</label><input id="lh" class="wide" type="text"></div>
          <div class="f"><label for="dc">Địa chỉ</label><input id="dc" class="wide" type="text"></div>
          <div class="f"><label for="dg">Diễn giải</label><input id="dg" class="wide" type="text" value="Bán hàng theo hóa đơn 100"></div>
          <div class="f"><label for="nv">NV bán hàng</label>
            <div class="pick short"><input id="nv" type="text"><button type="button" aria-label="Thêm nhân viên">${icon('plus', 19)}</button><button type="button" aria-label="Chọn nhân viên">${icon('down', 9, 5)}</button></div></div>
          <div class="f" style="height:28px"><span class="cap">Tham chiếu</span><button class="ref" type="button" aria-label="Chọn tham chiếu">${icon('findadd', 20)}</button></div>
        </div>
      </group-box>
      <group-box class="doc" caption="Chứng từ">
        <div class="rows">
          <div class="f"><label for="d1">Ngày hạch toán</label><span class="combo wide"><input id="d1" type="text" value="12/10/2022">${icon('down', 9, 5)}</span></div>
          <div class="f"><label for="d2">Ngày chứng từ</label><span class="combo wide"><input id="d2" type="text" value="12/10/2022">${icon('down', 9, 5)}</span></div>
          <div class="f"><label for="no">Số chứng từ</label><input id="no" class="wide" type="text" value="BH00440"></div>
        </div>
      </group-box>
    </div>

    <div class="terms">
      <label for="tt" style="width:103px">Điều khoản TT</label><span class="combo" style="width:140px"><select id="tt"><option></option></select>${icon('down', 9, 5)}</span>
      <label for="days" style="width:134px;padding-left:18px">Số ngày được nợ</label>
      <span class="spin"><input id="days" type="text" value="_____"><div><button type="button" aria-label="Tăng">${icon('up', 5, 3)}</button><button type="button" aria-label="Giảm">${icon('down', 5, 3)}</button></div></span>
      <span style="width:64px;padding-left:3px">(ngày)</span>
      <label for="due" style="width:107px">Hạn thanh toán</label><span class="combo" style="width:110px"><select id="due"><option></option></select>${icon('down', 9, 5)}</span>
    </div>
    <button class="fold" type="button" aria-label="Thu gọn">${icon('up', 6, 4)}</button>

    <tab-strip class="lines-tabs" tabs="_1. Hàng tiền|_2. Thuế|_3. Giá vốn|_4. Thống kê|_5. Khác"></tab-strip>
    <data-grid source="lines" closed></data-grid>

    <div class="foot">
      <div class="cmds"><button type="button">Phân bổ chiết khấu...</button><button type="button">Xem công nợ</button></div>
      <dl><dt>Tổng tiền hàng</dt><dd>0</dd><dt>Tiền chiết khấu</dt><dd>0</dd></dl>
      <dl class="second"><dt>Tiền thuế GTGT</dt><dd>0</dd><dt>Tổng tiền thanh toán</dt><dd>0</dd></dl>
    </div>
  </div>
  <div class="hint">F3 - Tìm nhanh, F6 - chọn mã quy cách, Ctrl+F2 - Xem số tồn, Số TK:  131 - Phải thu của khách hàng<i class="grip"></i></div>
`);

// ---------- misa-app: main window ----------
define('misa-app', `
  :host { display: flex; flex-direction: column; background: var(--face); }
  .title { display: flex; align-items: center; gap: 8px; flex: none; height: 29px; background: var(--title); color: #fff; border-top: 1px solid #5583b5; font-size: 15px; }
  .title > b { flex: 1; font-weight: 400; }
  .promo { align-self: stretch; display: flex; align-items: center; gap: 18px; padding: 0 9px 10px; font-weight: 700; margin-left: -8px; }
  .promo span { margin: 0 auto 0 -6px; }
  .win { display: flex; align-items: center; gap: 13px; padding: 0 8px 0 0; }
  .menus { height: 56px; background: var(--bar); padding: 0 4px 0 22px; display: flex; justify-content: space-between; font-size: 15px; }
  .menu { display: flex; gap: 14px; align-items: center; height: 27px; }
  .menu b { margin-left: 24px; }
  .menu.two { gap: 14px; margin-left: -3px; }
  .alert { position: relative; width: 44px; padding-top: 3px; }
  .alert b { position: absolute; top: 2px; left: 18px; right: 0; overflow: hidden; height: 18px; padding-left: 3px; line-height: 16px; background: #f00011; color: #fff; border: 1px solid #fff; font-size: 14px; }
  .body { flex: 1; min-height: 0; display: flex; gap: 5px; padding: 4px 0 3px 4px; }
  side-nav { width: 218px; flex: none; }
  .work { flex: 1; min-width: 0; display: flex; flex-direction: column; }
  .bar { display: flex; align-items: flex-end; height: 34px; border-bottom: 1px solid var(--line); padding-right: 3px; }
  .bar button.tab { height: 29px; padding: 0 6px; background: var(--tab); border: 1px solid var(--line); border-bottom: 0; font-weight: 700; font-size: 15px; }
  .gear { margin-left: auto; display: flex; align-items: center; gap: 10px; width: 46px; height: 29px; border: 1px solid var(--line); border-bottom: 0; color: #2a4a9a; }
  .period { display: flex; align-items: center; gap: 16px; height: 51px; padding: 0 12px; }
  .period select { appearance: none; width: 180px; height: 26px; padding: 0 6px; background: #fff; border: 1px solid var(--line); }
  .top { flex: 1; }
  .low { flex: 0 0 268px; }
  .sub { margin-top: 8px; height: 25px; }
  .status { display: flex; gap: 3px; height: 30px; padding: 3px 0 2px 3px; border-top: 1px solid var(--line); white-space: nowrap; }
  .status span { display: flex; align-items: center; gap: 4px; border: 1px solid var(--line); background: var(--bar); padding: 0 3px 0 2px; }
  .status b { font-size: 15px; }
  .status .sp { flex: 1; }
  voucher-dialog { position: absolute; inset: 40px 303px 43px 304px; }
`, `
  <div class="title">${icon('misa', 20)}<b>MISA SME.NET 2019 R8 Standard - Công ty TNHH Thương mại Dich vụ Hoàng Tình</b>
    <button class="promo" type="button" style="background:#00a1f1;width:211px">${icon('faq', 20)}<span>Câu hỏi thường gặp</span>${icon('chev', 13, 7)}</button>
    <button class="promo" type="button" style="background:#0061ff;width:180px">${icon('chat', 21, 19)}<span>Tư vấn sử dụng</span>${icon('chev', 13, 7)}</button>
    <button class="promo" type="button" style="background:#ff9026;width:186px">${icon('cart', 20)}<span>Gia hạn/Chuyển gói</span></button>
    <div class="win">
      <button type="button" aria-label="Thu nhỏ">${icon('min', 9)}</button>
      <button type="button" aria-label="Khôi phục">${icon('restore', 15, 13)}</button>
      <button type="button" aria-label="Đóng">${icon('close', 10)}</button>
    </div>
  </div>
  <div class="menus">
    <div>
      <div class="menu"><a href="#">Tệp</a><a href="#">Danh mục</a><a href="#">Nghiệp vụ</a><a href="#">Hệ thống</a><a href="#">Tiện ích</a><a href="#">Trợ giúp</a><b>Đang làm việc trên: Công ty TNHH TM DV Hoàng Tình</b></div>
      <div class="menu two">${icon('list', 20)}<a href="#">Chọn chi nhánh làm việc</a>${icon('find', 19)}<a href="#">Tìm kiếm</a></div>
    </div>
    <div class="alert">${icon('globe', 27)}<b>123</b></div>
  </div>
  <div class="body">
    <side-nav></side-nav>
    <div class="work">
      <div class="bar"><button class="tab" type="button">Bán hàng</button><button class="gear" type="button" aria-label="Thiết lập">${icon('gear', 20)}${icon('down', 6, 4)}</button></div>
      <div class="period"><label for="ky">Kỳ</label><select id="ky"><option>Quý 4</option></select></div>
      <data-grid class="top" source="vouchers" wide></data-grid>
      <tab-strip class="sub" tabs="Chi tiết|Thống kê"></tab-strip>
      <data-grid class="low" source="details" closed></data-grid>
    </div>
  </div>
  <div class="status">
    <span style="width:280px">${icon('server', 17, 20)}Máy chủ: HONGHA-171\\MISASME2017</span>
    <span style="width:227px">${icon('db', 15, 20)}Tên DLKT: KETOANTHUE2021</span>
    <span style="width:146px">${icon('user', 16, 20)}Người dùng: admin</span>
    <span style="width:12px"></span><span class="sp"></span>
    <span style="width:226px"><b>Tổng đài tư vấn: MISA SUPPORT</b></span>
    <span style="width:39px">OVR</span><span style="width:40px">NUM</span><span style="width:46px"></span><span style="width:45px"></span>
    <span style="width:67px">3:42 CH</span><span style="width:77px">12/10/2022</span>
  </div>
  <voucher-dialog></voucher-dialog>
`);

// ---------- task-bar ----------
const APPS = [['misa', 30, 30, 'on'], ['chrome', 32, 32, 'run'], ['excel', 28, 27, 'run'], ['mick', 30, 25, ''], ['paint', 29, 28, ''],
  ['zalo', 30, 30, ''], ['folder', 27, 26, 'run'], ['coc', 25, 26, 'run'], ['word', 27, 27, ''], ['cog', 24, 24, 'run']];
define('task-bar', `
  :host { display: flex; align-items: stretch; height: 50px; font: 14px/22px var(--ui-bold);
    background: linear-gradient(90deg, #efe3d6 0, #efe1d2 30%, #ebd5dc 48%, #eed6dc 66%, #e9dcd4 78%, #d9dbe7 88%, #dadde8 100%); }
  button { position: relative; display: grid; place-items: center; width: 62px; }
  .sys { width: 60px; }
  .sys + .sys { margin-right: 3px; }
  .on, .run { background: linear-gradient(#0078d7, #0078d7) bottom center / 51px 3px no-repeat; }
  .on { background: linear-gradient(#0078d7, #0078d7) bottom / 100% 3px no-repeat, #faf5f0; }
  em { position: absolute; left: 0; right: 0; text-align: center; font: 700 11px/14px Roboto, sans-serif; color: #0a6cf5; }
  em.mick { color: #f7931e; text-shadow: 1px 1px 0 #6b2c00; font-size: 12px; }
  .tray { margin-left: auto; display: flex; align-items: center; gap: 15px; padding-right: 31px; }
  .clock { text-align: center; line-height: 23px; }
  .note { position: relative; margin-left: 4px; padding-bottom: 3px; }
  .note b { position: absolute; left: 10px; top: 10px; width: 21px; height: 21px; border-radius: 50%; border: 1px solid #555; background: #d5d5dd; font: 14px/19px var(--ui-bold); text-align: center; }
`, `
  <button class="sys" type="button" aria-label="Bắt đầu">${icon('win', 20)}</button>
  <button class="sys" type="button" aria-label="Tìm">${icon('lens', 20)}</button>
  ${APPS.map(([n, w, h, c]) => `<button type="button" class="${c}" aria-label="${n}">${icon(n, w, h)}${n === 'zalo' ? '<em>Zalo</em>' : n === 'mick' ? '<em class="mick">mick</em>' : ''}</button>`).join('')}
  <div class="tray">${icon('caret', 15, 9)}${icon('cam', 15, 20)}${icon('mute', 20, 18)}<span>ENG</span>
    <div class="clock">3:42 PM<br>10/12/2022</div><div class="note">${icon('note', 20)}<b>8</b></div></div>
`);

define('misa-desktop', `
  :host { display: flex; flex-direction: column; height: 100vh; }
  misa-app { flex: 1; min-height: 0; position: relative; overflow: hidden; }
`, `<misa-app></misa-app><task-bar></task-bar>`);
</script>
</body>
</html>
